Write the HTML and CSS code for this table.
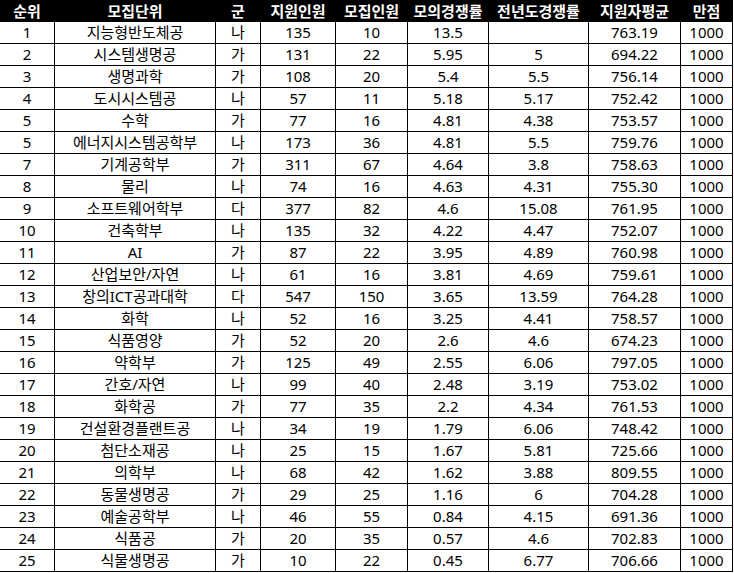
FILE: index.html
```html
<!DOCTYPE html>
<html lang="ko">
<head>
<meta charset="utf-8">
<title>모의경쟁률</title>
<link rel="stylesheet" href="styles.css">
</head>
<body>
<div class="table">
  <div class="row head">
    <div class="c">순위</div><div class="c">모집단위</div><div class="c">군</div><div class="c">지원인원</div><div class="c">모집인원</div><div class="c">모의경쟁률</div><div class="c">전년도경쟁률</div><div class="c">지원자평균</div><div class="c">만점</div>
  </div>
  <div class="row"><div class="c">1</div><div class="c">지능형반도체공</div><div class="c">나</div><div class="c">135</div><div class="c">10</div><div class="c">13.5</div><div class="c"></div><div class="c">763.19</div><div class="c">1000</div></div>
  <div class="row"><div class="c">2</div><div class="c">시스템생명공</div><div class="c">가</div><div class="c">131</div><div class="c">22</div><div class="c">5.95</div><div class="c">5</div><div class="c">694.22</div><div class="c">1000</div></div>
  <div class="row"><div class="c">3</div><div class="c">생명과학</div><div class="c">가</div><div class="c">108</div><div class="c">20</div><div class="c">5.4</div><div class="c">5.5</div><div class="c">756.14</div><div class="c">1000</div></div>
  <div class="row"><div class="c">4</div><div class="c">도시시스템공</div><div class="c">나</div><div class="c">57</div><div class="c">11</div><div class="c">5.18</div><div class="c">5.17</div><div class="c">752.42</div><div class="c">1000</div></div>
  <div class="row"><div class="c">5</div><div class="c">수학</div><div class="c">가</div><div class="c">77</div><div class="c">16</div><div class="c">4.81</div><div class="c">4.38</div><div class="c">753.57</div><div class="c">1000</div></div>
  <div class="row"><div class="c">5</div><div class="c">에너지시스템공학부</div><div class="c">나</div><div class="c">173</div><div class="c">36</div><div class="c">4.81</div><div class="c">5.5</div><div class="c">759.76</div><div class="c">1000</div></div>
  <div class="row"><div class="c">7</div><div class="c">기계공학부</div><div class="c">가</div><div class="c">311</div><div class="c">67</div><div class="c">4.64</div><div class="c">3.8</div><div class="c">758.63</div><div class="c">1000</div></div>
  <div class="row"><div class="c">8</div><div class="c">물리</div><div class="c">나</div><div class="c">74</div><div class="c">16</div><div class="c">4.63</div><div class="c">4.31</div><div class="c">755.30</div><div class="c">1000</div></div>
  <div class="row"><div class="c">9</div><div class="c">소프트웨어학부</div><div class="c">다</div><div class="c">377</div><div class="c">82</div><div class="c">4.6</div><div class="c">15.08</div><div class="c">761.95</div><div class="c">1000</div></div>
  <div class="row"><div class="c">10</div><div class="c">건축학부</div><div class="c">나</div><div class="c">135</div><div class="c">32</div><div class="c">4.22</div><div class="c">4.47</div><div class="c">752.07</div><div class="c">1000</div></div>
  <div class="row"><div class="c">11</div><div class="c">AI</div><div class="c">가</div><div class="c">87</div><div class="c">22</div><div class="c">3.95</div><div class="c">4.89</div><div class="c">760.98</div><div class="c">1000</div></div>
  <div class="row"><div class="c">12</div><div class="c">산업보안/자연</div><div class="c">나</div><div class="c">61</div><div class="c">16</div><div class="c">3.81</div><div class="c">4.69</div><div class="c">759.61</div><div class="c">1000</div></div>
  <div class="row"><div class="c">13</div><div class="c">창의ICT공과대학</div><div class="c">다</div><div class="c">547</div><div class="c">150</div><div class="c">3.65</div><div class="c">13.59</div><div class="c">764.28</div><div class="c">1000</div></div>
  <div class="row"><div class="c">14</div><div class="c">화학</div><div class="c">나</div><div class="c">52</div><div class="c">16</div><div class="c">3.25</div><div class="c">4.41</div><div class="c">758.57</div><div class="c">1000</div></div>
  <div class="row"><div class="c">15</div><div class="c">식품영양</div><div class="c">가</div><div class="c">52</div><div class="c">20</div><div class="c">2.6</div><div class="c">4.6</div><div class="c">674.23</div><div class="c">1000</div></div>
  <div class="row"><div class="c">16</div><div class="c">약학부</div><div class="c">가</div><div class="c">125</div><div class="c">49</div><div class="c">2.55</div><div class="c">6.06</div><div class="c">797.05</div><div class="c">1000</div></div>
  <div class="row"><div class="c">17</div><div class="c">간호/자연</div><div class="c">나</div><div class="c">99</div><div class="c">40</div><div class="c">2.48</div><div class="c">3.19</div><div class="c">753.02</div><div class="c">1000</div></div>
  <div class="row"><div class="c">18</div><div class="c">화학공</div><div class="c">가</div><div class="c">77</div><div class="c">35</div><div class="c">2.2</div><div class="c">4.34</div><div class="c">761.53</div><div class="c">1000</div></div>
  <div class="row"><div class="c">19</div><div class="c">건설환경플랜트공</div><div class="c">나</div><div class="c">34</div><div class="c">19</div><div class="c">1.79</div><div class="c">6.06</div><div class="c">748.42</div><div class="c">1000</div></div>
  <div class="row"><div class="c">20</div><div class="c">첨단소재공</div><div class="c">나</div><div class="c">25</div><div class="c">15</div><div class="c">1.67</div><div class="c">5.81</div><div class="c">725.66</div><div class="c">1000</div></div>
  <div class="row"><div class="c">21</div><div class="c">의학부</div><div class="c">나</div><div class="c">68</div><div class="c">42</div><div class="c">1.62</div><div class="c">3.88</div><div class="c">809.55</div><div class="c">1000</div></div>
  <div class="row"><div class="c">22</div><div class="c">동물생명공</div><div class="c">가</div><div class="c">29</div><div class="c">25</div><div class="c">1.16</div><div class="c">6</div><div class="c">704.28</div><div class="c">1000</div></div>
  <div class="row"><div class="c">23</div><div class="c">예술공학부</div><div class="c">나</div><div class="c">46</div><div class="c">55</div><div class="c">0.84</div><div class="c">4.15</div><div class="c">691.36</div><div class="c">1000</div></div>
  <div class="row"><div class="c">24</div><div class="c">식품공</div><div class="c">가</div><div class="c">20</div><div class="c">35</div><div class="c">0.57</div><div class="c">4.6</div><div class="c">702.83</div><div class="c">1000</div></div>
  <div class="row"><div class="c">25</div><div class="c">식물생명공</div><div class="c">가</div><div class="c">10</div><div class="c">22</div><div class="c">0.45</div><div class="c">6.77</div><div class="c">706.66</div><div class="c">1000</div></div>
</div>
</body>
</html>
```
FILE: styles.css
```css
html, body {
  margin: 0;
  padding: 0;
  background: #fff;
}
.table {
  width: 733px;
  font-family: "Noto Sans", "Noto Sans CJK KR", sans-serif;
  font-size: 15px;
  color: #000;
}
.row {
  display: grid;
  grid-template-columns: 55px 161px 45px 75px 72px 81px 100px 92px 52px;
  height: 22px;
}
.c {
  box-sizing: border-box;
  border-right: 1px solid #000;
  border-bottom: 1px solid #000;
  text-align: center;
  line-height: 21px;
  white-space: nowrap;
  overflow: hidden;
}
.head {
  background: #000;
  color: #fff;
  font-weight: 700;
}
.head .c {
  line-height: 22px;
}
```
